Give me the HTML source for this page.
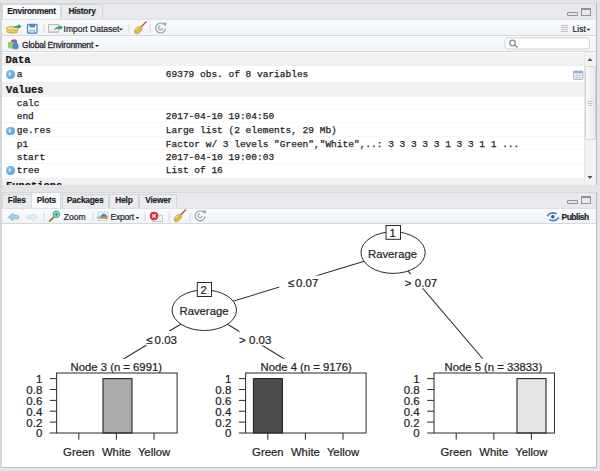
<!DOCTYPE html>
<html><head><meta charset="utf-8">
<style>
*{margin:0;padding:0;box-sizing:border-box}
html,body{width:600px;height:471px;overflow:hidden;background:#e3e4e7;font-family:"Liberation Sans",sans-serif}
.a{position:absolute}
.tab{position:absolute;height:16px;border:1px solid #d4d6d9;border-bottom:none;background:#e9ebee;font-weight:bold;font-size:8.4px;color:#1d1d22;line-height:12.8px;letter-spacing:-0.25px;-webkit-text-stroke:0.15px #1d1d22;text-align:center;border-radius:1px 1px 0 0}
.tab.on{background:#f9fafb}
.tb{position:absolute;background:linear-gradient(#f8fafc,#f1f4f7);border-bottom:1px solid #d6d8db}
.t{position:absolute;font-size:8.5px;color:#24242c;white-space:nowrap;line-height:10px;-webkit-text-stroke:0.2px #24242c}
.m{position:absolute;font-family:"Liberation Mono",monospace;font-size:9.5px;color:#1e1e1e;white-space:nowrap;line-height:12px;-webkit-text-stroke:0.25px #1e1e1e}
.b{font-weight:bold;color:#111;font-size:10.4px;-webkit-text-stroke:0.2px #111}
.sep{position:absolute;width:1px;background:#d3d5d8}
.row{position:absolute;left:1px;width:583px;border-bottom:1px solid #f0f0f0}
.hd{background:#f1f1f2}
.ic{position:absolute;width:8.6px;height:8.6px;border-radius:50%;background:radial-gradient(circle at 40% 35%,#8cc3ec,#4f93d2)}
.ic:after{content:"";position:absolute;left:3.3px;top:2.1px;border-left:2.8px solid #fff;border-top:2.2px solid transparent;border-bottom:2.2px solid transparent}
</style></head><body>

<!-- ============ TOP PANE ============ -->
<div class="a" style="left:1px;top:3px;width:596px;height:182px;background:#e7e9ec;border-top:1px solid #d6d8db;border-right:1px solid #b9babd;border-bottom:1px solid #c4c6c9"></div>
<div class="tab on" style="left:2px;top:4px;width:59px;height:16px">Environment</div>
<div class="tab" style="left:61px;top:4px;width:42px;height:15px">History</div>
<div class="a" style="left:567px;top:12px;width:11px;height:4px;border:1px solid #909296;border-radius:1px"></div>
<div class="a" style="left:581px;top:8px;width:10px;height:8px;border:1px solid #909296;border-top-width:2px"></div>

<div class="tb" style="left:1px;top:19px;width:595px;height:17px;border-top:1px solid #dfe1e4"></div>
<div class="tb" style="left:1px;top:36px;width:595px;height:16px"></div>

<!-- toolbar1 icons -->
<svg class="a" style="left:0;top:18px" width="600" height="34" viewBox="0 18 600 34">
 <!-- open -->
 <path d="M6.5 27.5 Q12 25 18 27.5 L17 32.5 Q12 34 7.5 32.5 Z" fill="#e8c55a" stroke="#c9a030" stroke-width="0.8"/>
 <path d="M7.5 28.5 Q12 27 17 28.5" fill="none" stroke="#fff3c0" stroke-width="1"/>
 <path d="M13.5 28 Q15 25 18.5 25.5 L18.5 24 L21.5 26.5 L18.5 29 L18.5 27.5 Q16 27.5 13.5 28 Z" fill="#22a36a"/>
 <!-- save -->
 <rect x="27.5" y="24.5" width="9.5" height="8.5" rx="0.8" fill="#fff" stroke="#4f8bcb" stroke-width="1.3"/>
 <rect x="29.5" y="24.5" width="5.5" height="3" fill="#4f8bcb"/>
 <rect x="29.8" y="30" width="5" height="3" fill="#cfe0f2" stroke="#4f8bcb" stroke-width="0.6"/>
 <rect class="sepr" x="43.5" y="24" width="1" height="9" fill="#d5d7da"/>
 <!-- import -->
 <rect x="48.5" y="24.5" width="10" height="8" fill="#eeeeef" stroke="#b4b5b8" stroke-width="0.9"/><rect x="49.5" y="31" width="9" height="1.5" fill="#d0d1d3"/>
 <path d="M54 30 Q56 26.5 59.5 26.5 L59.5 25 L63 27.5 L59.5 30 L59.5 28.5 Q57 28.5 54 30 Z" fill="#22a36a"/>
 <rect x="128.5" y="24" width="1" height="9" fill="#d5d7da"/>
 <!-- broom -->
 <path d="M140.5 27.5 L146 22" stroke="#c9473c" stroke-width="1.4" stroke-linecap="round"/>
 <ellipse cx="138.3" cy="30" rx="4.6" ry="2.7" transform="rotate(-45 138.3 30)" fill="#e4b845" stroke="#b8902a" stroke-width="0.5"/>
 <path d="M136 29.5 L139.5 26.5" stroke="#f7e2a0" stroke-width="0.8"/>
 <rect x="149.5" y="24" width="1" height="9" fill="#d5d7da"/>
 <!-- refresh -->
 <path d="M164.3 24.8 A4.9 4.9 0 1 0 165.5 28.5" fill="none" stroke="#a4a6aa" stroke-width="1.3"/>
 <path d="M162.5 27.8 A2 2 0 1 1 160.5 25.9" fill="none" stroke="#a4a6aa" stroke-width="1.2"/>
 <path d="M162.5 22.8 L166.5 22.6 L166 26.8 Z" fill="#a4a6aa"/>
 <!-- list icon -->
 <g fill="#c0c1c3"><rect x="561" y="25" width="7" height="1"/><rect x="561" y="27" width="7" height="1"/><rect x="561" y="29" width="7" height="1"/><rect x="561" y="31" width="7" height="1"/></g>
 <path d="M586.5 28.8 L590.5 28.8 L588.5 30.8 Z" fill="#222"/>
 <path d="M119 28.5 L123 28.5 L121 30.5 Z" fill="#222"/>
 <!-- global env -->
 <rect x="11" y="39.5" width="6" height="5" rx="1.5" fill="#9b5bb5"/>
 <rect x="8" y="42" width="6.5" height="6.5" rx="1" fill="#9ccc65"/>
 <rect x="12.5" y="43" width="6" height="6.3" rx="1.8" fill="#4a90d9"/>
 <path d="M95 45 L99 45 L97 47 Z" fill="#222"/>
 <!-- search -->
 <rect x="505" y="38" width="84.5" height="11" rx="3" fill="#fff" stroke="#cfd1d4" stroke-width="1"/>
 <circle cx="512.5" cy="43" r="2.8" fill="none" stroke="#8c8e91" stroke-width="1.3"/>
 <path d="M514.5 45 L517.5 47.5" stroke="#8c8e91" stroke-width="1.6"/>
</svg>
<div class="t" style="left:63.6px;top:23.7px">Import Dataset</div>
<div class="t" style="left:572.6px;top:23.5px">List</div>
<div class="t" style="left:22px;top:39.5px;letter-spacing:-0.2px;-webkit-text-stroke:0.3px #2a2a33">Global Environment</div>

<!-- content -->
<div class="a" style="left:1px;top:52px;width:595px;height:132.5px;background:#fff"></div>
<div class="row hd" style="top:52.5px;height:13.8px;border:none"></div>
<div class="row hd" style="top:82px;height:14.5px;border:none"></div>
<div class="a" style="left:1px;top:108.7px;width:583px;height:1px;background:#f8f8f8"></div>
<div class="a" style="left:1px;top:122.2px;width:583px;height:1px;background:#f8f8f8"></div>
<div class="a" style="left:1px;top:135.8px;width:583px;height:1px;background:#f8f8f8"></div>
<div class="a" style="left:1px;top:149.4px;width:583px;height:1px;background:#f8f8f8"></div>
<div class="a" style="left:1px;top:163.0px;width:583px;height:1px;background:#f8f8f8"></div>
<div class="a" style="left:1px;top:177.5px;width:583px;height:7px;overflow:hidden;background:#f1f1f2"><div class="m b" style="left:5px;top:2.6px">Functions</div></div>
<div class="m b" style="left:5.5px;top:53.8px">Data</div>
<div class="ic" style="left:6px;top:70px"></div>
<div class="m" style="left:16.7px;top:69.4px">a</div>
<div class="m" style="left:165.8px;top:69.4px">69379 obs. of 8 variables</div>
<div class="m b" style="left:6px;top:84.2px">Values</div>
<div class="m" style="left:16.7px;top:97.8px">calc</div>
<div class="m" style="left:16.7px;top:111.0px">end</div>
<div class="m" style="left:165.8px;top:111.0px">2017-04-10 19:04:50</div>
<div class="ic" style="left:6px;top:126.5px"></div>
<div class="m" style="left:16.7px;top:124.8px">ge.res</div>
<div class="m" style="left:165.8px;top:124.8px">Large list (2 elements, 29 Mb)</div>
<div class="m" style="left:16.7px;top:138.8px">p1</div>
<div class="m" style="left:165.8px;top:138.8px">Factor w/ 3 levels "Green","White",..: 3 3 3 3 3 1 3 3 1 1 ...</div>
<div class="m" style="left:16.7px;top:152.0px">start</div>
<div class="m" style="left:165.8px;top:152.0px">2017-04-10 19:00:03</div>
<div class="ic" style="left:6px;top:166.3px"></div>
<div class="m" style="left:16.7px;top:165.3px">tree</div>
<div class="m" style="left:165.8px;top:165.3px">List of 16</div>

<!-- scrollbar -->
<div class="a" style="left:584px;top:52px;width:12px;height:132.5px;background:#f3f3f4;border-left:1px solid #e6e6e6"></div>
<div class="a" style="left:584.5px;top:66px;width:11px;height:73.5px;background:linear-gradient(90deg,#fafafa,#e9e9ea);border:1px solid #d2d3d5;border-radius:1px"></div>
<svg class="a" style="left:560px;top:52px" width="40" height="133" viewBox="560 52 40 133">
 <path d="M587.5 61 L592.5 61 L590 58 Z" fill="#555"/>
 <path d="M587.5 176 L592.5 176 L590 179 Z" fill="#555"/>
 <g fill="#b9babc"><rect x="587.5" y="101" width="5" height="0.8"/><rect x="587.5" y="103" width="5" height="0.8"/><rect x="587.5" y="105" width="5" height="0.8"/></g>
 <rect x="573.5" y="71" width="9.5" height="8.5" rx="1" fill="#e9eef4" stroke="#9fb1c6" stroke-width="0.8"/>
 <rect x="573.5" y="71" width="9.5" height="2.2" fill="#8fb3d9"/>
 <path d="M576.7 73 v6.5 M579.9 73 v6.5 M573.5 75.5 h9.5 M573.5 77.5 h9.5" stroke="#b5c3d3" stroke-width="0.5"/>
</svg>

<!-- ============ BOTTOM PANE ============ -->
<div class="a" style="left:1px;top:191.5px;width:596px;height:276px;background:#e7e9ec;border-top:1px solid #d6d8db;border-right:1px solid #b9babd;border-bottom:1px solid #bfc0c3"></div>
<div class="tab" style="left:2px;top:193.5px;width:29.5px;height:14px;line-height:11px">Files</div>
<div class="tab on" style="left:31.2px;top:192px;width:30.3px;height:16px;line-height:14px">Plots</div>
<div class="tab" style="left:61.5px;top:193.5px;width:47.2px;height:14px;line-height:11px">Packages</div>
<div class="tab" style="left:108.7px;top:193.5px;width:30.5px;height:14px;line-height:11px">Help</div>
<div class="tab" style="left:139.2px;top:193.5px;width:37.6px;height:14px;line-height:11px">Viewer</div>
<div class="a" style="left:567px;top:200px;width:11px;height:4px;border:1px solid #909296;border-radius:1px"></div>
<div class="a" style="left:581px;top:196px;width:10px;height:8px;border:1px solid #909296;border-top-width:2px"></div>
<div class="tb" style="left:1px;top:207.5px;width:595px;height:16.5px;border-top:1px solid #dfe1e4"></div>
<div class="a" style="left:2px;top:224px;width:594px;height:242.5px;background:#fff"></div>
<svg class="a" style="left:0;top:205px" width="600" height="20" viewBox="0 205 600 20">
 <!-- back -->
 <path d="M8.3 217 L12.8 213.3 L12.8 215.2 Q17.5 214.5 19 216.5 Q19.3 219 17 219.2 L12.8 218.8 L12.8 220.8 Z" fill="#9fd0ee" stroke="#6fb0da" stroke-width="0.7"/>
 <!-- forward -->
 <path d="M37.7 217 L33.2 213.3 L33.2 215.2 Q28.5 214.5 27 216.5 Q26.7 219 29 219.2 L33.2 218.8 L33.2 220.8 Z" fill="#dceaf4" stroke="#cadcea" stroke-width="0.7"/>
 <rect x="43.5" y="212" width="1" height="9" fill="#d5d7da"/>
 <!-- zoom -->
 <path d="M53.6 217.3 L49.8 221" stroke="#a8742c" stroke-width="1.8" stroke-linecap="round"/>
 <circle cx="56.3" cy="214.3" r="3.3" fill="#8fdcc8" stroke="#4a9e8c" stroke-width="1"/>
 <path d="M56.3 212.8 v3 M54.8 214.3 h3" stroke="#1f7e6a" stroke-width="0.9"/>
 <rect x="92.5" y="212" width="1" height="9" fill="#d5d7da"/>
 <!-- export -->
 <rect x="98.5" y="212" width="9.5" height="8.5" fill="#f6f8fa" stroke="#b9c0c6" stroke-width="0.6"/>
 <path d="M100 217 Q102 213 104 213.5 Q106 214 107.5 216.5 L107.5 217.5 L100 217.5 Z" fill="#3b8ad6"/>
 <path d="M99.5 217 Q103 216.2 107.5 217 L107.5 219 L99.5 219 Z" fill="#d99a3a"/>
 <path d="M96 217.5 L99.5 215.5 L99.5 219.5 Z" fill="#8cc8ea"/>
 <path d="M135.5 217 L139.5 217 L137.5 219 Z" fill="#222"/>
 <rect x="144.5" y="212" width="1" height="9" fill="#d5d7da"/>
 <!-- remove -->
 <rect x="152.5" y="215" width="10" height="6.5" fill="#f2f2f2" stroke="#a5a7aa" stroke-width="0.6"/>
 <circle cx="154" cy="216" r="4" fill="#d9363e" stroke="#a51e25" stroke-width="0.5"/>
 <path d="M152.3 214.3 L155.7 217.7 M155.7 214.3 L152.3 217.7" stroke="#fff" stroke-width="1.2"/>
 <rect x="168.5" y="212" width="1" height="9" fill="#d5d7da"/>
 <!-- broom -->
 <path d="M180 215.5 L185.5 210" stroke="#c9473c" stroke-width="1.4" stroke-linecap="round"/>
 <ellipse cx="177.8" cy="218" rx="4.6" ry="2.7" transform="rotate(-45 177.8 218)" fill="#e4b845" stroke="#b8902a" stroke-width="0.5"/>
 <path d="M175.5 217.5 L179 214.5" stroke="#f7e2a0" stroke-width="0.8"/>
 <rect x="189.5" y="212" width="1" height="9" fill="#d5d7da"/>
 <!-- refresh -->
 <path d="M203.8 212.6 A4.9 4.9 0 1 0 205 216.3" fill="none" stroke="#a4a6aa" stroke-width="1.3"/>
 <path d="M202 215.6 A2 2 0 1 1 200 213.7" fill="none" stroke="#a4a6aa" stroke-width="1.2"/>
 <path d="M202 210.6 L206 210.4 L205.5 214.6 Z" fill="#a4a6aa"/>
 <!-- publish -->
 <path d="M547.5 215.5 Q551 211.5 556 213.5" fill="none" stroke="#3d85c6" stroke-width="1.7" stroke-linecap="round"/>
 <path d="M558.5 218 Q555 222 550 220" fill="none" stroke="#3d85c6" stroke-width="1.7" stroke-linecap="round"/>
 <circle cx="552.8" cy="216.8" r="1.8" fill="#1f5fa8"/>
</svg>
<div class="t" style="left:63.8px;top:211.8px">Zoom</div>
<div class="t" style="left:110.5px;top:211.8px;letter-spacing:-0.2px">Export</div>
<div class="t" style="left:561.5px;top:211.8px;font-weight:bold;letter-spacing:-0.5px">Publish</div>

<svg class="a" style="left:0;top:0" width="600" height="471" viewBox="0 0 600 471" font-family="Liberation Sans" fill="none">
 <g stroke="#2a2a2a" stroke-width="1.05">
  <line x1="393" y1="252.5" x2="204" y2="310"/>
  <line x1="393" y1="253.5" x2="494" y2="372"/>
  <line x1="204" y1="310" x2="117" y2="363"/>
  <line x1="204" y1="310" x2="291" y2="363"/>
 </g>
 <g fill="#fff" stroke="#2a2a2a" stroke-width="1">
  <ellipse cx="393.1" cy="252.6" rx="32.1" ry="20.8"/>
  <ellipse cx="204.3" cy="310.2" rx="32.2" ry="20.3"/>
  <rect x="386" y="225.5" width="14.5" height="13.8"/>
  <rect x="197.3" y="282.5" width="14.2" height="14"/>
 </g>
 <g fill="#fff">
  <rect x="279.3" y="275.5" width="39.5" height="13"/>
  <rect x="403.5" y="274.3" width="34" height="14"/>
  <rect x="146.2" y="331" width="30" height="14.5"/>
  <rect x="239.5" y="331" width="33" height="14.5"/>
  <rect x="60" y="358.8" width="112" height="12.7"/>
  <rect x="250" y="358.8" width="112" height="12.7"/>
  <rect x="440" y="358.8" width="112" height="12.7"/>
 </g>
 <g fill="#1e1e1e" font-size="11.3" stroke="#1e1e1e" stroke-width="0.22">
  <text x="389.5" y="236.7">1</text>
  <text x="200.5" y="294">2</text>
  <text x="368" y="257.9">Raverage</text>
  <text x="179.5" y="315">Raverage</text>
  <text x="70.6" y="371">Node 3 (n = 6991)</text>
  <text x="260.5" y="371">Node 4 (n = 9176)</text>
  <text x="444.5" y="371">Node 5 (n = 33833)</text>
 </g>
 <g fill="#1e1e1e" font-size="11.5" stroke="#1e1e1e" stroke-width="0.22">
  <text x="288" y="286.7">≤</text><text x="296" y="286.7">0.07</text>
  <text x="404.8" y="286.5">&gt;</text><text x="414.8" y="286.5">0.07</text>
  <text x="146.3" y="343.5">≤</text><text x="154.6" y="343.5">0.03</text>
  <text x="239" y="343.8">&gt;</text><text x="249" y="343.8">0.03</text>
 </g>
 <g id="bp" fill="#1e1e1e" font-size="11.3" stroke="#1e1e1e" stroke-width="0.22">
  <rect x="103.0" y="378.6" width="29" height="54.4" fill="#aaaaaa" stroke="#1e1e1e" stroke-width="1.05"/>
  <rect x="56.6" y="373" width="120.5" height="60" fill="none" stroke="#333" stroke-width="1.05"/>
  <line x1="49.8" y1="433.0" x2="56.6" y2="433.0" stroke="#333" stroke-width="1.05"/>
  <text x="42.3" y="437.4" text-anchor="end" font-size="11.5">0</text>
  <line x1="49.8" y1="422.1" x2="56.6" y2="422.1" stroke="#333" stroke-width="1.05"/>
  <text x="42.3" y="426.5" text-anchor="end" font-size="11.5">0.2</text>
  <line x1="49.8" y1="411.2" x2="56.6" y2="411.2" stroke="#333" stroke-width="1.05"/>
  <text x="42.3" y="415.6" text-anchor="end" font-size="11.5">0.4</text>
  <line x1="49.8" y1="400.4" x2="56.6" y2="400.4" stroke="#333" stroke-width="1.05"/>
  <text x="42.3" y="404.8" text-anchor="end" font-size="11.5">0.6</text>
  <line x1="49.8" y1="389.5" x2="56.6" y2="389.5" stroke="#333" stroke-width="1.05"/>
  <text x="42.3" y="393.9" text-anchor="end" font-size="11.5">0.8</text>
  <line x1="49.8" y1="378.6" x2="56.6" y2="378.6" stroke="#333" stroke-width="1.05"/>
  <text x="42.3" y="383.0" text-anchor="end" font-size="11.5">1</text>
  <line x1="78.8" y1="433" x2="78.8" y2="439.7" stroke="#333" stroke-width="1.05"/>
  <text x="78.8" y="456" text-anchor="middle">Green</text>
  <line x1="116.4" y1="433" x2="116.4" y2="439.7" stroke="#333" stroke-width="1.05"/>
  <text x="116.4" y="456" text-anchor="middle">White</text>
  <line x1="154.0" y1="433" x2="154.0" y2="439.7" stroke="#333" stroke-width="1.05"/>
  <text x="154.0" y="456" text-anchor="middle">Yellow</text>
  <rect x="253.4" y="378.6" width="29" height="54.4" fill="#4d4d4d" stroke="#1e1e1e" stroke-width="1.05"/>
  <rect x="245.6" y="373" width="120.5" height="60" fill="none" stroke="#333" stroke-width="1.05"/>
  <line x1="238.8" y1="433.0" x2="245.6" y2="433.0" stroke="#333" stroke-width="1.05"/>
  <text x="231.3" y="437.4" text-anchor="end" font-size="11.5">0</text>
  <line x1="238.8" y1="422.1" x2="245.6" y2="422.1" stroke="#333" stroke-width="1.05"/>
  <text x="231.3" y="426.5" text-anchor="end" font-size="11.5">0.2</text>
  <line x1="238.8" y1="411.2" x2="245.6" y2="411.2" stroke="#333" stroke-width="1.05"/>
  <text x="231.3" y="415.6" text-anchor="end" font-size="11.5">0.4</text>
  <line x1="238.8" y1="400.4" x2="245.6" y2="400.4" stroke="#333" stroke-width="1.05"/>
  <text x="231.3" y="404.8" text-anchor="end" font-size="11.5">0.6</text>
  <line x1="238.8" y1="389.5" x2="245.6" y2="389.5" stroke="#333" stroke-width="1.05"/>
  <text x="231.3" y="393.9" text-anchor="end" font-size="11.5">0.8</text>
  <line x1="238.8" y1="378.6" x2="245.6" y2="378.6" stroke="#333" stroke-width="1.05"/>
  <text x="231.3" y="383.0" text-anchor="end" font-size="11.5">1</text>
  <line x1="267.8" y1="433" x2="267.8" y2="439.7" stroke="#333" stroke-width="1.05"/>
  <text x="267.8" y="456" text-anchor="middle">Green</text>
  <line x1="305.4" y1="433" x2="305.4" y2="439.7" stroke="#333" stroke-width="1.05"/>
  <text x="305.4" y="456" text-anchor="middle">White</text>
  <line x1="343.0" y1="433" x2="343.0" y2="439.7" stroke="#333" stroke-width="1.05"/>
  <text x="343.0" y="456" text-anchor="middle">Yellow</text>
  <rect x="517.0" y="378.6" width="29" height="54.4" fill="#e6e6e6" stroke="#1e1e1e" stroke-width="1.05"/>
  <rect x="434.0" y="373" width="120.5" height="60" fill="none" stroke="#333" stroke-width="1.05"/>
  <line x1="427.2" y1="433.0" x2="434.0" y2="433.0" stroke="#333" stroke-width="1.05"/>
  <text x="419.7" y="437.4" text-anchor="end" font-size="11.5">0</text>
  <line x1="427.2" y1="422.1" x2="434.0" y2="422.1" stroke="#333" stroke-width="1.05"/>
  <text x="419.7" y="426.5" text-anchor="end" font-size="11.5">0.2</text>
  <line x1="427.2" y1="411.2" x2="434.0" y2="411.2" stroke="#333" stroke-width="1.05"/>
  <text x="419.7" y="415.6" text-anchor="end" font-size="11.5">0.4</text>
  <line x1="427.2" y1="400.4" x2="434.0" y2="400.4" stroke="#333" stroke-width="1.05"/>
  <text x="419.7" y="404.8" text-anchor="end" font-size="11.5">0.6</text>
  <line x1="427.2" y1="389.5" x2="434.0" y2="389.5" stroke="#333" stroke-width="1.05"/>
  <text x="419.7" y="393.9" text-anchor="end" font-size="11.5">0.8</text>
  <line x1="427.2" y1="378.6" x2="434.0" y2="378.6" stroke="#333" stroke-width="1.05"/>
  <text x="419.7" y="383.0" text-anchor="end" font-size="11.5">1</text>
  <line x1="456.2" y1="433" x2="456.2" y2="439.7" stroke="#333" stroke-width="1.05"/>
  <text x="456.2" y="456" text-anchor="middle">Green</text>
  <line x1="493.8" y1="433" x2="493.8" y2="439.7" stroke="#333" stroke-width="1.05"/>
  <text x="493.8" y="456" text-anchor="middle">White</text>
  <line x1="531.4" y1="433" x2="531.4" y2="439.7" stroke="#333" stroke-width="1.05"/>
  <text x="531.4" y="456" text-anchor="middle">Yellow</text>
 </g>
</svg>

<div class="a" style="left:0;top:3px;width:1.5px;height:465px;background:#d3d5d8"></div>
</body></html>
